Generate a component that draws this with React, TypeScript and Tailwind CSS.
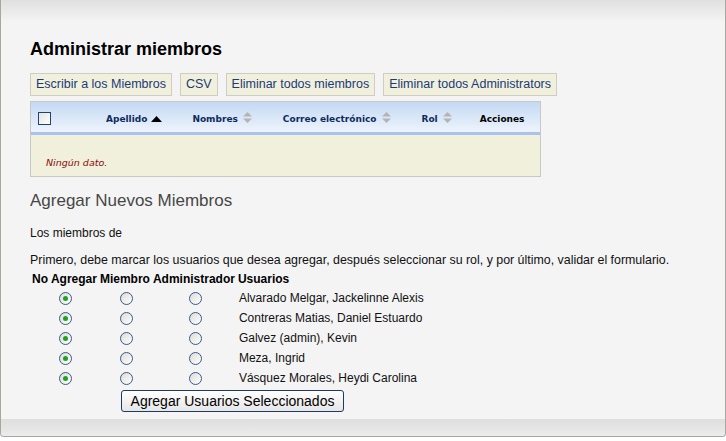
import React from 'react';

const users = [
  'Alvarado Melgar, Jackelinne Alexis',
  'Contreras Matias, Daniel Estuardo',
  'Galvez (admin), Kevin',
  'Meza, Ingrid',
  'Vásquez Morales, Heydi Carolina',
];

const actions = ['Escribir a los Miembros', 'CSV', 'Eliminar todos miembros', 'Eliminar todos Administrators'];

function SortBoth() {
  return (
    <svg width="9" height="11" viewBox="0 0 9 11" className="inline-block ml-[5px] align-[-1px]">
      <path d="M4.5 0 L9 4.5 L0 4.5 Z" fill="#b4b4b4" />
      <path d="M0 6.5 L9 6.5 L4.5 11 Z" fill="#b4b4b4" />
    </svg>
  );
}

function SortUp() {
  return (
    <svg width="11" height="7" viewBox="0 0 11 7" className="inline-block ml-[4px] align-[4px]">
      <path d="M5.5 0 L11 6 L0 6 Z" fill="#000" />
    </svg>
  );
}

function Radio({ checked }: { checked?: boolean }) {
  return (
    <span className="inline-flex w-[13px] h-[13px] rounded-full border border-[#3a5a88] bg-gradient-to-br from-[#dcdcd6] to-white items-center justify-center">
      {checked && <span className="w-[5px] h-[5px] rounded-full bg-[#21a121]" />}
    </span>
  );
}

export default function App() {
  return (
    <div className="w-[726px] h-[441px] bg-white font-['Liberation_Sans',Arial,sans-serif] text-black overflow-hidden">
      <div className="w-[726px] h-[437px] border-x border-b border-[#a9a6a2] rounded-b-[4px] bg-[#f4f4f4] flex flex-col">
        <div className="h-[22px] bg-gradient-to-b from-[#e0e0e0] to-[#f4f4f4]" />
        <div className="flex-1 pl-[29px]">
          <h1 className="mt-[17px] text-[18px] leading-[20px] font-bold">Administrar miembros</h1>
          <div className="mt-[14px] flex gap-[8px] h-[23px]">
            {actions.map((a) => (
              <span
                key={a}
                className="px-[5px] border border-[#cdcdc4] bg-[#f0f0dc] text-[#1b3a78] text-[12.5px] leading-[21px]"
              >
                {a}
              </span>
            ))}
          </div>
          <div className="mt-[5px] w-[511px] border border-[#c8c8c4] font-['DejaVu_Sans',Verdana,sans-serif]">
            <div className="h-[33px] bg-gradient-to-b from-[#c4d9f3] to-[#eef4fc] flex items-center text-[9px] font-bold text-[#0d2b5e] border-b-[3px] border-[#a9c4ec]">
              <span className="ml-[7px] mt-[2px] w-[13px] h-[13px] border border-[#23426e] bg-gradient-to-br from-[#e4e4e0] to-white" />
              <span className="ml-[55px] mt-[5px] flex items-center">Apellido<SortUp /></span>
              <span className="ml-[30px] mt-[5px]">Nombres<SortBoth /></span>
              <span className="ml-[31px] mt-[5px]">Correo electrónico<SortBoth /></span>
              <span className="ml-[31px] mt-[5px]">Rol<SortBoth /></span>
              <span className="ml-[28px] mt-[5px] text-black">Acciones</span>
            </div>
            <div className="h-[41px] bg-[#f0f0dc] pl-[15px] pt-[21px] text-[9.5px] italic text-[#8b0a0a] leading-[14px]">Ningún dato.</div>
          </div>
          <h2 className="mt-[14px] text-[17px] leading-[20px] text-[#474747]">Agregar Nuevos Miembros</h2>
          <p className="mt-[15px] text-[12px] leading-[14px] text-[#111]">Los miembros de</p>
          <p className="mt-[13px] text-[12.4px] leading-[14px] text-[#111]">
            Primero, debe marcar los usuarios que desea agregar, después seleccionar su rol, y por último, validar el formulario.
          </p>
          <table className="mt-[3px] ml-[2px] text-[12px] border-separate border-spacing-0">
            <thead>
              <tr className="h-[18px]">
                <th className="font-bold text-left pr-[3px]">No Agregar</th>
                <th className="font-bold text-left pr-[3px]">Miembro</th>
                <th className="font-bold text-left pr-[3px]">Administrador</th>
                <th className="font-bold text-left">Usuarios</th>
              </tr>
            </thead>
            <tbody>
              {users.map((u) => (
                <tr key={u} className="h-[20px]">
                  <td className="text-center align-middle leading-[0]"><Radio checked /></td>
                  <td className="text-center align-middle leading-[0]"><Radio /></td>
                  <td className="text-center align-middle leading-[0]"><Radio /></td>
                  <td className="align-middle pl-[1px] text-[#111] leading-[14px]">{u}</td>
                </tr>
              ))}
            </tbody>
          </table>
          <button className="mt-[2px] ml-[91px] w-[223px] h-[22px] border border-[#1d3a66] rounded-[3px] bg-gradient-to-b from-white to-[#e6e6e6] text-[14px] leading-[18px] text-black">
            Agregar Usuarios Seleccionados
          </button>
        </div>
        <div className="h-[17px] bg-gradient-to-b from-[#dedede] to-[#ececec] rounded-b-[4px]" />
      </div>
    </div>
  );
}
